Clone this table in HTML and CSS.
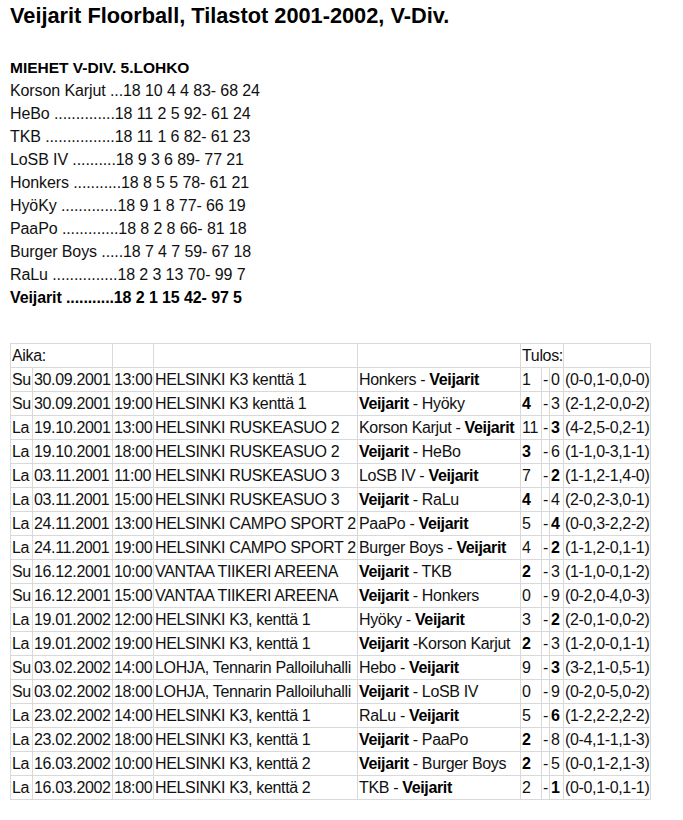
FILE: index.html
```html
<!DOCTYPE html>
<html lang="fi">
<head>
<meta charset="utf-8">
<title>Veijarit Floorball, Tilastot 2001-2002, V-Div.</title>
<link rel="stylesheet" href="styles.css">
</head>
<body>
<h1 class="title">Veijarit Floorball, Tilastot 2001-2002, V-Div.</h1>
<div class="standings">
  <div class="group-head">MIEHET V-DIV. 5.LOHKO</div>
  <div class="line">Korson Karjut ...18 10 4 4 83- 68 24</div>
  <div class="line">HeBo ..............18 11 2 5 92- 61 24</div>
  <div class="line">TKB ................18 11 1 6 82- 61 23</div>
  <div class="line">LoSB IV ..........18 9 3 6 89- 77 21</div>
  <div class="line">Honkers ...........18 8 5 5 78- 61 21</div>
  <div class="line">HyöKy .............18 9 1 8 77- 66 19</div>
  <div class="line">PaaPo .............18 8 2 8 66- 81 18</div>
  <div class="line">Burger Boys .....18 7 4 7 59- 67 18</div>
  <div class="line">RaLu ...............18 2 3 13 70- 99 7</div>
  <div class="line own">Veijarit ...........18 2 1 15 42- 97 5</div>
</div>
<table class="games">
  <colgroup>
    <col class="c-day"><col class="c-date"><col class="c-time"><col class="c-venue"><col class="c-match"><col class="c-s1"><col class="c-dash"><col class="c-s2"><col class="c-per">
  </colgroup>
  <tr><td colspan="2">Aika:</td><td></td><td></td><td></td><td colspan="3">Tulos:</td><td></td></tr>
  <tr><td>Su</td><td>30.09.2001</td><td>13:00</td><td>HELSINKI K3 kenttä 1</td><td>Honkers - <b>Veijarit</b></td><td>1</td><td>-</td><td>0</td><td>(0-0,1-0,0-0)</td></tr>
  <tr><td>Su</td><td>30.09.2001</td><td>19:00</td><td>HELSINKI K3 kenttä 1</td><td><b>Veijarit</b> - Hyöky</td><td><b>4</b></td><td>-</td><td>3</td><td>(2-1,2-0,0-2)</td></tr>
  <tr><td>La</td><td>19.10.2001</td><td>13:00</td><td>HELSINKI RUSKEASUO 2</td><td>Korson Karjut - <b>Veijarit</b></td><td>11</td><td>-</td><td><b>3</b></td><td>(4-2,5-0,2-1)</td></tr>
  <tr><td>La</td><td>19.10.2001</td><td>18:00</td><td>HELSINKI RUSKEASUO 2</td><td><b>Veijarit</b> - HeBo</td><td><b>3</b></td><td>-</td><td>6</td><td>(1-1,0-3,1-1)</td></tr>
  <tr><td>La</td><td>03.11.2001</td><td>11:00</td><td>HELSINKI RUSKEASUO 3</td><td>LoSB IV - <b>Veijarit</b></td><td>7</td><td>-</td><td><b>2</b></td><td>(1-1,2-1,4-0)</td></tr>
  <tr><td>La</td><td>03.11.2001</td><td>15:00</td><td>HELSINKI RUSKEASUO 3</td><td><b>Veijarit</b> - RaLu</td><td><b>4</b></td><td>-</td><td>4</td><td>(2-0,2-3,0-1)</td></tr>
  <tr><td>La</td><td>24.11.2001</td><td>13:00</td><td>HELSINKI CAMPO SPORT 2</td><td>PaaPo - <b>Veijarit</b></td><td>5</td><td>-</td><td><b>4</b></td><td>(0-0,3-2,2-2)</td></tr>
  <tr><td>La</td><td>24.11.2001</td><td>19:00</td><td>HELSINKI CAMPO SPORT 2</td><td>Burger Boys - <b>Veijarit</b></td><td>4</td><td>-</td><td><b>2</b></td><td>(1-1,2-0,1-1)</td></tr>
  <tr><td>Su</td><td>16.12.2001</td><td>10:00</td><td>VANTAA TIIKERI AREENA</td><td><b>Veijarit</b> - TKB</td><td><b>2</b></td><td>-</td><td>3</td><td>(1-1,0-0,1-2)</td></tr>
  <tr><td>Su</td><td>16.12.2001</td><td>15:00</td><td>VANTAA TIIKERI AREENA</td><td><b>Veijarit</b> - Honkers</td><td>0</td><td>-</td><td>9</td><td>(0-2,0-4,0-3)</td></tr>
  <tr><td>La</td><td>19.01.2002</td><td>12:00</td><td>HELSINKI K3, kenttä 1</td><td>Hyöky - <b>Veijarit</b></td><td>3</td><td>-</td><td><b>2</b></td><td>(2-0,1-0,0-2)</td></tr>
  <tr><td>La</td><td>19.01.2002</td><td>19:00</td><td>HELSINKI K3, kenttä 1</td><td><b>Veijarit</b> -Korson Karjut</td><td><b>2</b></td><td>-</td><td>3</td><td>(1-2,0-0,1-1)</td></tr>
  <tr><td>Su</td><td>03.02.2002</td><td>14:00</td><td>LOHJA, Tennarin Palloiluhalli</td><td>Hebo - <b>Veijarit</b></td><td>9</td><td>-</td><td><b>3</b></td><td>(3-2,1-0,5-1)</td></tr>
  <tr><td>Su</td><td>03.02.2002</td><td>18:00</td><td>LOHJA, Tennarin Palloiluhalli</td><td><b>Veijarit</b> - LoSB IV</td><td>0</td><td>-</td><td>9</td><td>(0-2,0-5,0-2)</td></tr>
  <tr><td>La</td><td>23.02.2002</td><td>14:00</td><td>HELSINKI K3, kenttä 1</td><td>RaLu - <b>Veijarit</b></td><td>5</td><td>-</td><td><b>6</b></td><td>(1-2,2-2,2-2)</td></tr>
  <tr><td>La</td><td>23.02.2002</td><td>18:00</td><td>HELSINKI K3, kenttä 1</td><td><b>Veijarit</b> - PaaPo</td><td><b>2</b></td><td>-</td><td>8</td><td>(0-4,1-1,1-3)</td></tr>
  <tr><td>La</td><td>16.03.2002</td><td>10:00</td><td>HELSINKI K3, kenttä 2</td><td><b>Veijarit</b> - Burger Boys</td><td><b>2</b></td><td>-</td><td>5</td><td>(0-0,1-2,1-3)</td></tr>
  <tr><td>La</td><td>16.03.2002</td><td>18:00</td><td>HELSINKI K3, kenttä 2</td><td>TKB - <b>Veijarit</b></td><td>2</td><td>-</td><td><b>1</b></td><td>(0-0,1-0,1-1)</td></tr>
</table>
</body>
</html>
```
FILE: styles.css
```css
html, body {
  margin: 0;
  background: #ffffff;
}
body {
  padding: 4px 10px 20px 10px;
  font-family: "Liberation Sans", Arial, sans-serif;
  color: #111111;
}
.title {
  margin: 0;
  font-size: 21.75px;
  line-height: 24px;
  font-weight: bold;
  color: #000000;
}
.standings {
  margin-top: 28px;
  font-size: 16px;
  line-height: 23px;
  letter-spacing: -0.1px;
  white-space: nowrap;
}
.group-head {
  font-size: 15.5px;
  font-weight: bold;
  letter-spacing: 0;
  color: #000000;
}
.own {
  font-weight: bold;
  color: #000000;
}
.games {
  margin-top: 34px;
  border-collapse: collapse;
  table-layout: fixed;
  width: 640px;
  font-size: 16px;
  line-height: 19px;
  letter-spacing: -0.35px;
}
.games td {
  border: 1px solid #d9d9d9;
  padding: 2px 0 2px 1px;
  white-space: nowrap;
  overflow: visible;
  vertical-align: middle;
}
.games b {
  color: #000000;
}
.c-day { width: 22px; }
.c-date { width: 80px; }
.c-time { width: 41px; }
.c-venue { width: 204px; }
.c-match { width: 163px; }
.c-s1 { width: 21px; }
.c-dash { width: 8px; }
.c-s2 { width: 14px; }
.c-per { width: 87px; }
```
